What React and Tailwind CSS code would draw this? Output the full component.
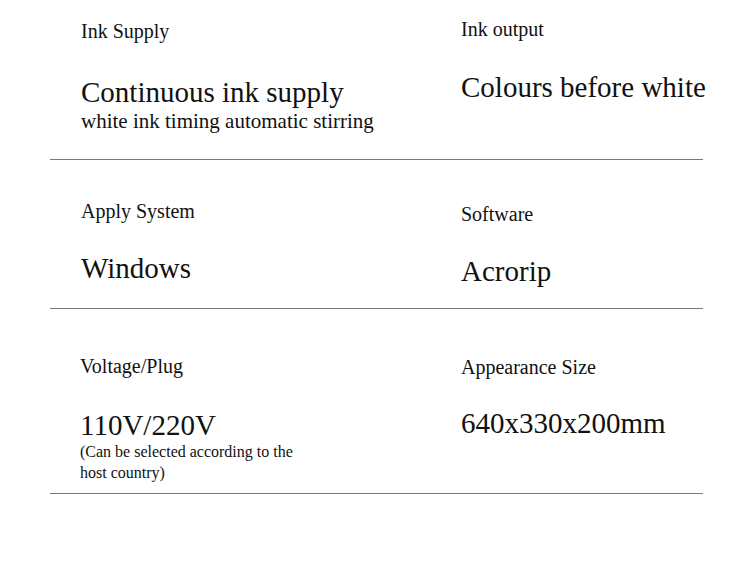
const serif = { fontFamily: '"Liberation Serif", "Times New Roman", serif' };

function Label({ children }) {
  return <p className="text-[20px] leading-[24px]">{children}</p>;
}

function Value({ children, className = "" }) {
  return (
    <p className={`whitespace-nowrap text-[29px] leading-[31px] ${className}`}>
      {children}
    </p>
  );
}

export default function App() {
  return (
    <div className="min-h-[585px] w-[750px] bg-white text-[#111]" style={serif}>
      <div className="ml-[50px] w-[653px]">
        <div className="grid grid-cols-[380px_1fr] items-start border-b border-[#7a7a7a] pl-[31px] pb-[27px]">
          <div className="pt-[19px]">
            <Label>Ink Supply</Label>
            <Value className="mt-[34px]">Continuous ink supply</Value>
            <p className="mt-[2px] text-[21px] leading-[22px]">
              white ink timing automatic stirring
            </p>
          </div>
          <div className="pt-[17px]">
            <Label>Ink output</Label>
            <Value className="mt-[31px]">Colours before white</Value>
          </div>
        </div>

        <div className="grid grid-cols-[380px_1fr] items-start border-b border-[#7a7a7a] pl-[31px] pb-[21px]">
          <div className="pt-[39px]">
            <Label>Apply System</Label>
            <Value className="mt-[30px]">Windows</Value>
          </div>
          <div className="pt-[42px]">
            <Label>Software</Label>
            <Value className="mt-[30px]">Acrorip</Value>
          </div>
        </div>

        <div className="grid grid-cols-[380px_1fr] items-start border-b border-[#7a7a7a] pl-[30px] pb-[10px]">
          <div className="pt-[45px]">
            <Label>Voltage/Plug</Label>
            <Value className="mt-[32px]">110V/220V</Value>
            <p className="w-[240px] text-[16px] leading-[21px]">
              (Can be selected according to the host country)
            </p>
          </div>
          <div className="pt-[46px] pl-px">
            <Label>Appearance Size</Label>
            <Value className="mt-[29px]">640x330x200mm</Value>
          </div>
        </div>
      </div>
    </div>
  );
}
